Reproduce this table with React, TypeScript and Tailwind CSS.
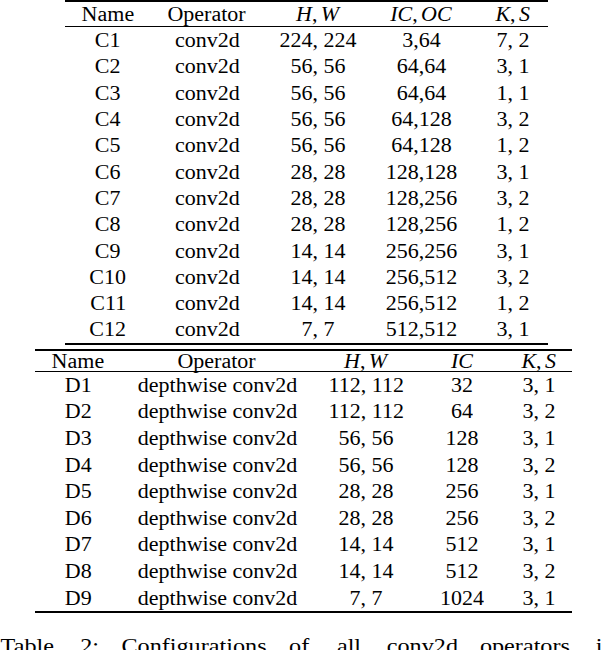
const convRows = [
  ["C1", "conv2d", "224, 224", "3,64", "7, 2"],
  ["C2", "conv2d", "56, 56", "64,64", "3, 1"],
  ["C3", "conv2d", "56, 56", "64,64", "1, 1"],
  ["C4", "conv2d", "56, 56", "64,128", "3, 2"],
  ["C5", "conv2d", "56, 56", "64,128", "1, 2"],
  ["C6", "conv2d", "28, 28", "128,128", "3, 1"],
  ["C7", "conv2d", "28, 28", "128,256", "3, 2"],
  ["C8", "conv2d", "28, 28", "128,256", "1, 2"],
  ["C9", "conv2d", "14, 14", "256,256", "3, 1"],
  ["C10", "conv2d", "14, 14", "256,512", "3, 2"],
  ["C11", "conv2d", "14, 14", "256,512", "1, 2"],
  ["C12", "conv2d", "7, 7", "512,512", "3, 1"],
];

const dwRows = [
  ["D1", "depthwise conv2d", "112, 112", "32", "3, 1"],
  ["D2", "depthwise conv2d", "112, 112", "64", "3, 2"],
  ["D3", "depthwise conv2d", "56, 56", "128", "3, 1"],
  ["D4", "depthwise conv2d", "56, 56", "128", "3, 2"],
  ["D5", "depthwise conv2d", "28, 28", "256", "3, 1"],
  ["D6", "depthwise conv2d", "28, 28", "256", "3, 2"],
  ["D7", "depthwise conv2d", "14, 14", "512", "3, 1"],
  ["D8", "depthwise conv2d", "14, 14", "512", "3, 2"],
  ["D9", "depthwise conv2d", "7, 7", "1024", "3, 1"],
];

const Cell = ({ children, className = "" }: { children: React.ReactNode; className?: string }) => (
  <div className={`flex items-center justify-center ${className}`}>
    <span className="inline-block scale-x-110 whitespace-nowrap">{children}</span>
  </div>
);

const Math2 = ({ a, b }: { a: string; b: string }) => (
  <>
    <i>{a}</i>,<i className="ml-[3px]">{b}</i>
  </>
);

const App = () => {
  const topCols = "grid grid-cols-[86px_112px_110px_96px_79px]";
  const botCols = "grid grid-cols-[86px_192px_106px_86px_67px]";
  return (
    <div
      className="relative w-[604px] h-[650px] overflow-hidden bg-white text-black text-[20px] leading-none"
      style={{ fontFamily: '"Liberation Serif", "Times New Roman", serif' }}
    >
      {/* conv2d table */}
      <div className="ml-[65px] w-[483px] border-t-2 border-b-2 border-black">
        <div className={`${topCols} h-[25px] pt-[2px] items-start border-b border-black`}>
          <Cell>Name</Cell>
          <Cell>Operator</Cell>
          <Cell><Math2 a="H" b="W" /></Cell>
          <Cell><Math2 a="IC" b="OC" /></Cell>
          <Cell className="pl-[9px]"><Math2 a="K" b="S" /></Cell>
        </div>
        {convRows.map((r) => (
          <div key={r[0]} className={`${topCols} h-[26.3px]`}>
            <Cell>{r[0]}</Cell>
            <Cell>{r[1]}</Cell>
            <Cell>{r[2]}</Cell>
            <Cell>{r[3]}</Cell>
            <Cell className="pl-[9px]">{r[4]}</Cell>
          </div>
        ))}
      </div>

      {/* depthwise table */}
      <div className="mt-[4px] ml-[35px] w-[537px] border-t-2 border-b-2 border-black">
        <div className={`${botCols} h-[21px] items-start border-b border-black`}>
          <Cell>Name</Cell>
          <Cell>Operator</Cell>
          <Cell><Math2 a="H" b="W" /></Cell>
          <Cell><i>IC</i></Cell>
          <Cell><Math2 a="K" b="S" /></Cell>
        </div>
        {dwRows.map((r) => (
          <div key={r[0]} className={`${botCols} h-[26.6px]`}>
            {r.map((v, i) => (
              <Cell key={i}>{v}</Cell>
            ))}
          </div>
        ))}
      </div>

      <div className="mt-[22px] flex justify-between whitespace-nowrap text-[22px] leading-none pl-[3px] pr-[2px]">
        <span className="inline-block scale-x-110">Table</span>
        <span className="inline-block scale-x-110">2:</span>
        <span className="inline-block scale-x-110">Configurations</span>
        <span className="inline-block scale-x-110">of</span>
        <span className="inline-block scale-x-110">all</span>
        <span className="inline-block scale-x-110">conv2d</span>
        <span className="inline-block scale-x-110">operators</span>
        <span className="inline-block scale-x-110">i</span>
      </div>
    </div>
  );
};

export default App;
